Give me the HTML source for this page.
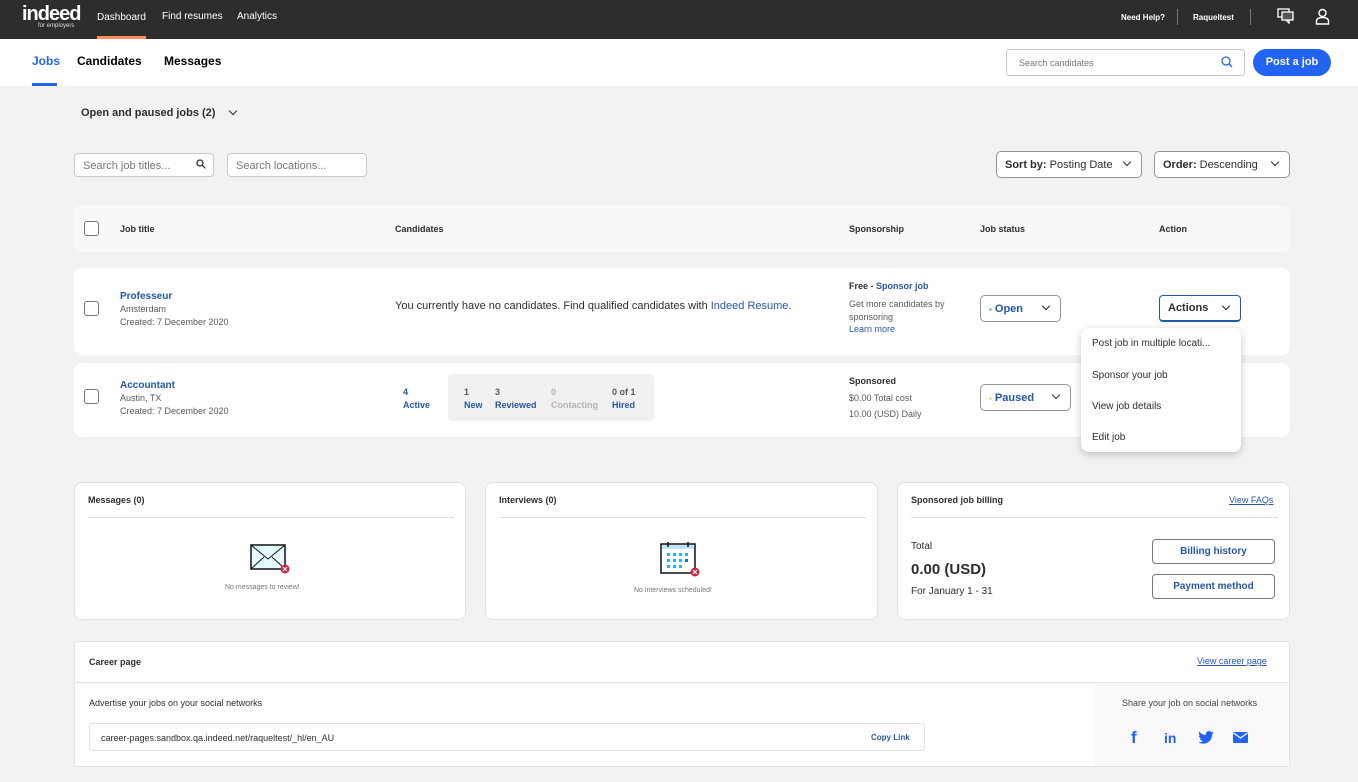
<!DOCTYPE html>
<html><head><meta charset="utf-8"><style>
*{box-sizing:border-box;margin:0;padding:0}
body{width:1358px;height:782px;background:#f2f2f2;font-family:"Liberation Sans",sans-serif;color:#2d2d2d;position:relative;overflow:hidden;font-size:10px}
.a{position:absolute}
.card{position:absolute;background:#fff;border-radius:8px}
.blue{color:#2557a7}
.b{font-weight:bold}
.inp{position:absolute;background:#fff;border:1px solid #c9c9c9;border-radius:4px;height:24px;font-size:11px;color:#767676;padding:6px 8px}
.sel{position:absolute;background:#fff;border:1px solid #949494;border-radius:5px;height:27px;font-size:11px;padding:7px 8px;color:#2d2d2d}
.chk{position:absolute;width:15px;height:15px;border:1px solid #767676;border-radius:3px;background:#fff}
.chev{position:absolute;width:6px;height:6px;border-right:1.7px solid #2d2d2d;border-bottom:1.7px solid #2d2d2d;transform:rotate(45deg)}
.g{color:#595959}
</style></head><body>
<!-- top bar -->
<div class="a" style="left:0;top:0;width:1358px;height:39px;background:#2d2d2d"></div>
<div class="a" style="left:22px;top:3px;color:#fff;font-size:20px;font-weight:bold;letter-spacing:-1px">indeed</div>
<div class="a" style="left:38px;top:23px;color:#ddd;font-size:6px">for employers</div>
<div class="a" style="left:97px;top:12px;color:#fff;font-size:10px">Dashboard</div>
<div class="a" style="left:97px;top:36px;width:49px;height:3px;background:#ff8c5a"></div>
<div class="a" style="left:162px;top:11px;color:#fff;font-size:10px">Find resumes</div>
<div class="a" style="left:237px;top:11px;color:#fff;font-size:10px">Analytics</div>
<div class="a" style="left:1121px;top:13px;color:#fff;font-size:8px;font-weight:bold">Need Help?</div>
<div class="a" style="left:1177px;top:9px;width:1px;height:16px;background:#777"></div>
<div class="a" style="left:1193px;top:13px;color:#fff;font-size:8px;font-weight:bold">Raqueltest</div>
<div class="a" style="left:1250px;top:9px;width:1px;height:16px;background:#777"></div>
<svg class="a" style="left:1277px;top:8px" width="18" height="16" viewBox="0 0 18 16"><rect x="1" y="1" width="11" height="8" fill="none" stroke="#fff" stroke-width="1.3"/><rect x="5" y="4" width="11" height="8" fill="#555" stroke="#fff" stroke-width="1.3"/><path d="M12 12v3l-3-3" fill="none" stroke="#fff" stroke-width="1.3"/></svg>
<svg class="a" style="left:1315px;top:8px" width="15" height="17" viewBox="0 0 15 17"><circle cx="7.5" cy="5" r="3.5" fill="none" stroke="#fff" stroke-width="1.4"/><path d="M1.5 16v-3c0-2 2-3.5 6-3.5s6 1.5 6 3.5v3z" fill="none" stroke="#fff" stroke-width="1.4"/></svg>
<!-- sub nav -->
<div class="a" style="left:0;top:39px;width:1358px;height:47px;background:#fff"></div>
<div class="a b" style="left:32px;top:54px;font-size:12px;color:#2164f3">Jobs</div>
<div class="a" style="left:32px;top:83px;width:25px;height:3px;background:#2164f3"></div>
<div class="a b" style="left:77px;top:54px;font-size:12px;color:#000">Candidates</div>
<div class="a b" style="left:164px;top:54px;font-size:12px;color:#000">Messages</div>
<div class="a" style="left:1006px;top:49px;width:239px;height:27px;border:1px solid #c9c9c9;border-radius:3px;font-size:9px;color:#767676;padding:8px 12px">Search candidates</div>
<svg class="a" style="left:1221px;top:56px" width="12" height="12" viewBox="0 0 12 12"><circle cx="5" cy="5" r="4" fill="none" stroke="#2164f3" stroke-width="1.3"/><path d="M8 8l3 3" stroke="#2164f3" stroke-width="1.3"/></svg>
<div class="a b" style="left:1253px;top:49px;width:78px;height:27px;background:#2164f3;border-radius:14px;color:#fff;font-size:11px;text-align:center;line-height:27px">Post a job</div>
<!-- filters -->
<div class="a b" style="left:81px;top:107px;font-size:11px">Open and paused jobs (2)</div>
<div class="chev" style="left:230px;top:108px"></div>
<div class="inp" style="left:74px;top:153px;width:140px">Search job titles...</div>
<svg class="a" style="left:196px;top:159px" width="10" height="10" viewBox="0 0 10 10"><circle cx="4" cy="4" r="3" fill="none" stroke="#333" stroke-width="1.3"/><path d="M6.3 6.3l3 3" stroke="#333" stroke-width="1.3"/></svg>
<div class="inp" style="left:227px;top:153px;width:140px">Search locations...</div>
<div class="sel" style="left:996px;top:151px;width:146px"><b>Sort by:</b> Posting Date</div>
<div class="chev" style="left:1124px;top:159px"></div>
<div class="sel" style="left:1154px;top:151px;width:136px"><b>Order:</b> Descending</div>
<div class="chev" style="left:1272px;top:159px"></div>
<!-- table header -->
<div class="card" style="left:74px;top:205px;width:1216px;height:47px;background:#f9f8f7"></div>
<div class="chk" style="left:84px;top:221px"></div>
<div class="a b" style="left:120px;top:224px;font-size:9px">Job title</div>
<div class="a b" style="left:395px;top:224px;font-size:9px">Candidates</div>
<div class="a b" style="left:849px;top:224px;font-size:9px">Sponsorship</div>
<div class="a b" style="left:980px;top:224px;font-size:9px">Job status</div>
<div class="a b" style="left:1159px;top:224px;font-size:9px">Action</div>
<!-- row1 -->
<div class="card" style="left:74px;top:268px;width:1216px;height:87px"></div>
<div class="chk" style="left:84px;top:301px"></div>
<div class="a b blue" style="left:120px;top:291px;font-size:10px">Professeur</div>
<div class="a g" style="left:120px;top:304px;font-size:9px">Amsterdam</div>
<div class="a g" style="left:120px;top:317px;font-size:9px">Created: 7 December 2020</div>
<div class="a" style="left:395px;top:300px;font-size:11px">You currently have no candidates. Find qualified candidates with <span class="blue">Indeed Resume</span>.</div>
<div class="a" style="left:849px;top:281px;font-size:9px"><b>Free - </b><b class="blue">Sponsor job</b></div>
<div class="a g" style="left:849px;top:298px;font-size:9px;line-height:13px;width:120px">Get more candidates by<br>sponsoring</div>
<div class="a blue" style="left:849px;top:324px;font-size:9px">Learn more</div>
<div class="sel" style="left:980px;top:295px;width:81px;height:27px"><span style="color:#3aa86b;font-size:8px">▪</span> <b class="blue">Open</b></div>
<div class="chev" style="left:1043px;top:303px"></div>
<div class="a b" style="left:1159px;top:295px;width:82px;height:27px;border:1.5px solid #2557a7;border-bottom-width:2.5px;border-radius:4px;font-size:11px;padding:6px 8px">Actions</div>
<div class="chev" style="left:1223px;top:303px"></div>
<!-- row2 -->
<div class="card" style="left:74px;top:363px;width:1216px;height:74px"></div>
<div class="chk" style="left:84px;top:389px"></div>
<div class="a b blue" style="left:120px;top:380px;font-size:10px">Accountant</div>
<div class="a g" style="left:120px;top:393px;font-size:9px">Austin, TX</div>
<div class="a g" style="left:120px;top:406px;font-size:9px">Created: 7 December 2020</div>
<div class="a b blue" style="left:403px;top:386px;font-size:9px;line-height:13px">4<br>Active</div>
<div class="a" style="left:448px;top:374px;width:206px;height:47px;background:#f2f1f0;border-radius:4px"></div>
<div class="a b" style="left:464px;top:386px;font-size:9px;line-height:13px"><span class="g">1</span><br><span class="blue">New</span></div>
<div class="a b" style="left:495px;top:386px;font-size:9px;line-height:13px"><span class="g">3</span><br><span class="blue">Reviewed</span></div>
<div class="a b" style="left:551px;top:386px;font-size:9px;line-height:13px;color:#b4b4b4">0<br>Contacting</div>
<div class="a b" style="left:612px;top:386px;font-size:9px;line-height:13px"><span class="g">0 of 1</span><br><span class="blue">Hired</span></div>
<div class="a b" style="left:849px;top:376px;font-size:9px">Sponsored</div>
<div class="a g" style="left:849px;top:393px;font-size:9px">$0.00 Total cost</div>
<div class="a g" style="left:849px;top:409px;font-size:9px">10.00 (USD) Daily</div>
<div class="sel" style="left:980px;top:384px;width:91px;height:27px"><span style="color:#e8c33d;font-size:8px">▪</span> <b class="blue">Paused</b></div>
<div class="chev" style="left:1053px;top:392px"></div>
<!-- dropdown -->
<div class="a" style="left:1081px;top:328px;width:160px;height:124px;background:#fff;border-radius:8px;box-shadow:0 2px 8px rgba(0,0,0,.22)"></div>
<div class="a" style="left:1092px;top:338px;font-size:10px">Post job in multiple locati...</div>
<div class="a" style="left:1092px;top:370px;font-size:10px">Sponsor your job</div>
<div class="a" style="left:1092px;top:401px;font-size:10px">View job details</div>
<div class="a" style="left:1092px;top:432px;font-size:10px">Edit job</div>
<!-- bottom cards -->
<div class="card" style="left:74px;top:482px;width:392px;height:138px;border:1px solid #e4e2e0"></div>
<div class="a b" style="left:88px;top:495px;font-size:9px">Messages (0)</div>
<div class="a" style="left:88px;top:517px;width:366px;height:1px;background:#ddd"></div>
<svg class="a" style="left:250px;top:544px" width="42" height="32" viewBox="0 0 42 32"><rect x="1" y="1" width="34" height="24" fill="#e6fbff" stroke="#111" stroke-width="1.5"/><path d="M1 1l17 14 17-14M1 25l13-12M35 25L22 13" fill="none" stroke="#111" stroke-width="1"/><circle cx="35" cy="25" r="4.5" fill="#d3223e"/><path d="M33 23l4 4M37 23l-4 4" stroke="#fff" stroke-width="1.2"/></svg>
<div class="a" style="left:225px;top:584px;font-size:7px;color:#767676">No messages to review!</div>
<div class="card" style="left:485px;top:482px;width:393px;height:138px;border:1px solid #e4e2e0"></div>
<div class="a b" style="left:499px;top:495px;font-size:9px">Interviews (0)</div>
<div class="a" style="left:499px;top:517px;width:367px;height:1px;background:#ddd"></div>
<svg class="a" style="left:660px;top:541px" width="42" height="36" viewBox="0 0 42 36"><rect x="1" y="3" width="34" height="29" fill="#fff" stroke="#111" stroke-width="1.5"/><rect x="2" y="4" width="32" height="4" fill="#bfe4ff"/><path d="M8 1v5M28 1v5" stroke="#111" stroke-width="1.5"/><g fill="#2ab0f6"><rect x="7" y="12" width="3" height="3"/><rect x="13" y="12" width="3" height="3"/><rect x="19" y="12" width="3" height="3"/><rect x="25" y="12" width="3" height="3"/><rect x="7" y="18" width="3" height="3"/><rect x="13" y="18" width="3" height="3"/><rect x="19" y="18" width="3" height="3"/><rect x="25" y="18" width="3" height="3" fill="#1271d8"/><rect x="7" y="24" width="3" height="3"/><rect x="13" y="24" width="3" height="3"/><rect x="19" y="24" width="3" height="3"/></g><circle cx="35" cy="31" r="4.5" fill="#d3223e"/><path d="M33 29l4 4M37 29l-4 4" stroke="#fff" stroke-width="1.2"/></svg>
<div class="a" style="left:634px;top:587px;font-size:7px;color:#767676">No interviews scheduled!</div>
<div class="card" style="left:897px;top:482px;width:393px;height:138px;border:1px solid #e4e2e0"></div>
<div class="a b" style="left:911px;top:495px;font-size:9px">Sponsored job billing</div>
<div class="a" style="left:1229px;top:495px;font-size:9px;color:#2557a7;text-decoration:underline">View FAQs</div>
<div class="a" style="left:911px;top:517px;width:367px;height:1px;background:#ddd"></div>
<div class="a" style="left:911px;top:541px;font-size:10px">Total</div>
<div class="a b" style="left:911px;top:561px;font-size:15px">0.00 (USD)</div>
<div class="a" style="left:911px;top:586px;font-size:10px">For January 1 - 31</div>
<div class="a b blue" style="left:1152px;top:539px;width:123px;height:25px;border:1px solid #767676;border-radius:4px;font-size:10px;text-align:center;line-height:23px">Billing history</div>
<div class="a b blue" style="left:1152px;top:574px;width:123px;height:25px;border:1px solid #767676;border-radius:4px;font-size:10px;text-align:center;line-height:23px">Payment method</div>
<!-- career -->
<div class="a" style="left:74px;top:641px;width:1216px;height:126px;background:#fff;border:1px solid #e4e2e0;border-radius:4px"></div>
<div class="a b" style="left:89px;top:657px;font-size:9px">Career page</div>
<div class="a" style="left:1197px;top:656px;font-size:9px;color:#2557a7;text-decoration:underline">View career page</div>
<div class="a" style="left:75px;top:682px;width:1214px;height:1px;background:#e4e2e0"></div>
<div class="a" style="left:1095px;top:683px;width:194px;height:83px;background:#f9f9f9"></div>
<div class="a" style="left:89px;top:698px;font-size:9px">Advertise your jobs on your social networks</div>
<div class="a" style="left:89px;top:723px;width:836px;height:28px;border:1px solid #e4e2e0;border-radius:3px"></div>
<div class="a" style="left:101px;top:733px;font-size:9px">career-pages.sandbox.qa.indeed.net/raqueltest/_hl/en_AU</div>
<div class="a b" style="left:871px;top:733px;font-size:8px;color:#2557a7">Copy Link</div>
<div class="a" style="left:1122px;top:698px;font-size:9px;color:#424242">Share your job on social networks</div>
<div class="a b" style="left:1131px;top:728px;font-size:17px;color:#2164f3">f</div>
<div class="a b" style="left:1164px;top:730px;font-size:14px;color:#2164f3">in</div>
<svg class="a" style="left:1198px;top:731px" width="16" height="13" viewBox="0 0 24 20"><path d="M24 2.4c-.9.4-1.8.7-2.8.8 1-.6 1.8-1.6 2.2-2.700-1 .6-2 1-3.1 1.2C19.3.7 18 0 16.6 0c-2.7 0-4.9 2.2-4.9 4.9 0 .4 0 .8.1 1.1C7.7 5.8 4.1 3.9 1.7.9c-.4.7-.7 1.6-.7 2.5 0 1.7.9 3.2 2.2 4.1-.8 0-1.6-.2-2.2-.6v.1c0 2.4 1.7 4.4 3.9 4.8-.4.1-.8.2-1.300.2-.3 0-.6 0-.9-.1.6 2 2.4 3.4 4.6 3.4-1.7 1.3-3.8 2.1-6.1 2.1-.4 0-.8 0-1.2-.1 2.2 1.4 4.8 2.2 7.5 2.2 9.1 0 14-7.5 14-14v-.6c1-.7 1.8-1.6 2.5-2.5z" fill="#2164f3"/></svg>
<svg class="a" style="left:1233px;top:732px" width="15" height="11" viewBox="0 0 15 11"><rect width="15" height="11" rx="1" fill="#2164f3"/><path d="M0.5 1l7 5 7-5" fill="none" stroke="#fff" stroke-width="1.3"/></svg>
</body></html>
